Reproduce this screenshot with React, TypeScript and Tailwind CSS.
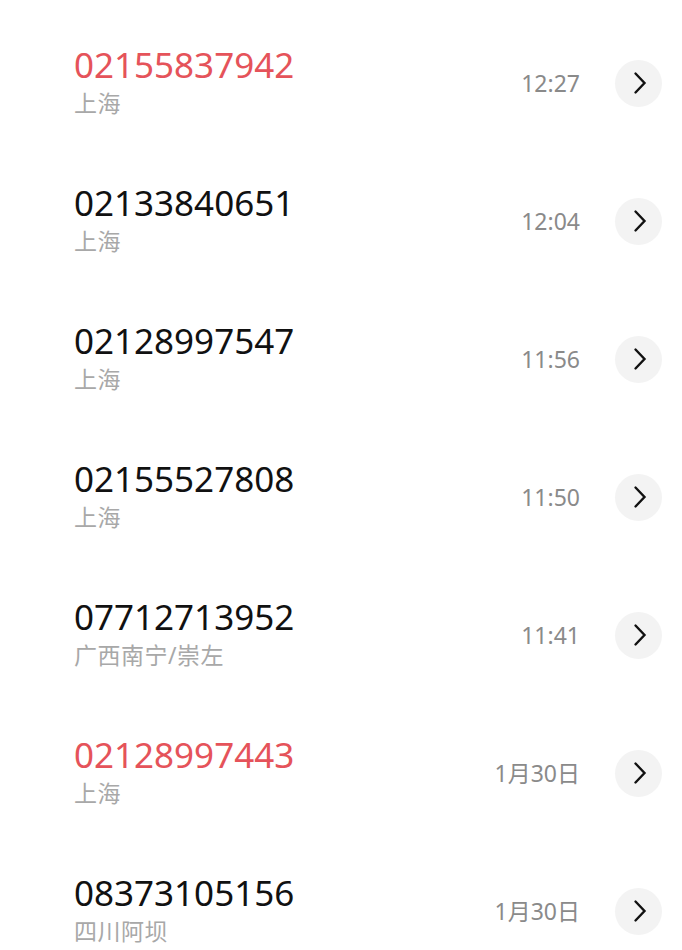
const CALLS = [
  { number: '02155837942', place: '上海', time: '12:27', missed: true },
  { number: '02133840651', place: '上海', time: '12:04', missed: false },
  { number: '02128997547', place: '上海', time: '11:56', missed: false },
  { number: '02155527808', place: '上海', time: '11:50', missed: false },
  { number: '07712713952', place: '广西南宁/崇左', time: '11:41', missed: false },
  { number: '02128997443', place: '上海', time: '1月30日', missed: true },
  { number: '08373105156', place: '四川阿坝', time: '1月30日', missed: false },
];

function Chevron() {
  return (
    <svg width="14" height="24" viewBox="0 0 14 24" fill="none" stroke="#111" strokeWidth="2.4" strokeLinecap="round" strokeLinejoin="miter">
      <path d="M2.5 2.5l9 9.5-9 9.5" />
    </svg>
  );
}

export default function App() {
  return (
    <div className="w-[682px] h-[950px] overflow-hidden bg-white pt-[14px] font-['Noto_Sans','Noto_Sans_CJK_SC',sans-serif]">
      {CALLS.map((c, i) => (
        <div key={i} className="h-[138px] flex items-center pl-[74px] pr-[20px]">
          <div className="flex-1 flex flex-col pb-[6px]">
            <div className={`text-[35px] leading-[46px] ${c.missed ? 'text-[#e5535a]' : 'text-[#111]'}`}>
              {c.number}
            </div>
            <div className="text-[23px] leading-[30px] tracking-[0.5px] text-[#a8a8a8]">{c.place}</div>
          </div>
          <div className="text-[23px] text-[#8a8a8a] mr-[35px]">{c.time}</div>
          <div className="w-[47px] h-[47px] rounded-full bg-[#f3f3f3] flex items-center justify-center pl-[3px]">
            <Chevron />
          </div>
        </div>
      ))}
    </div>
  );
}
